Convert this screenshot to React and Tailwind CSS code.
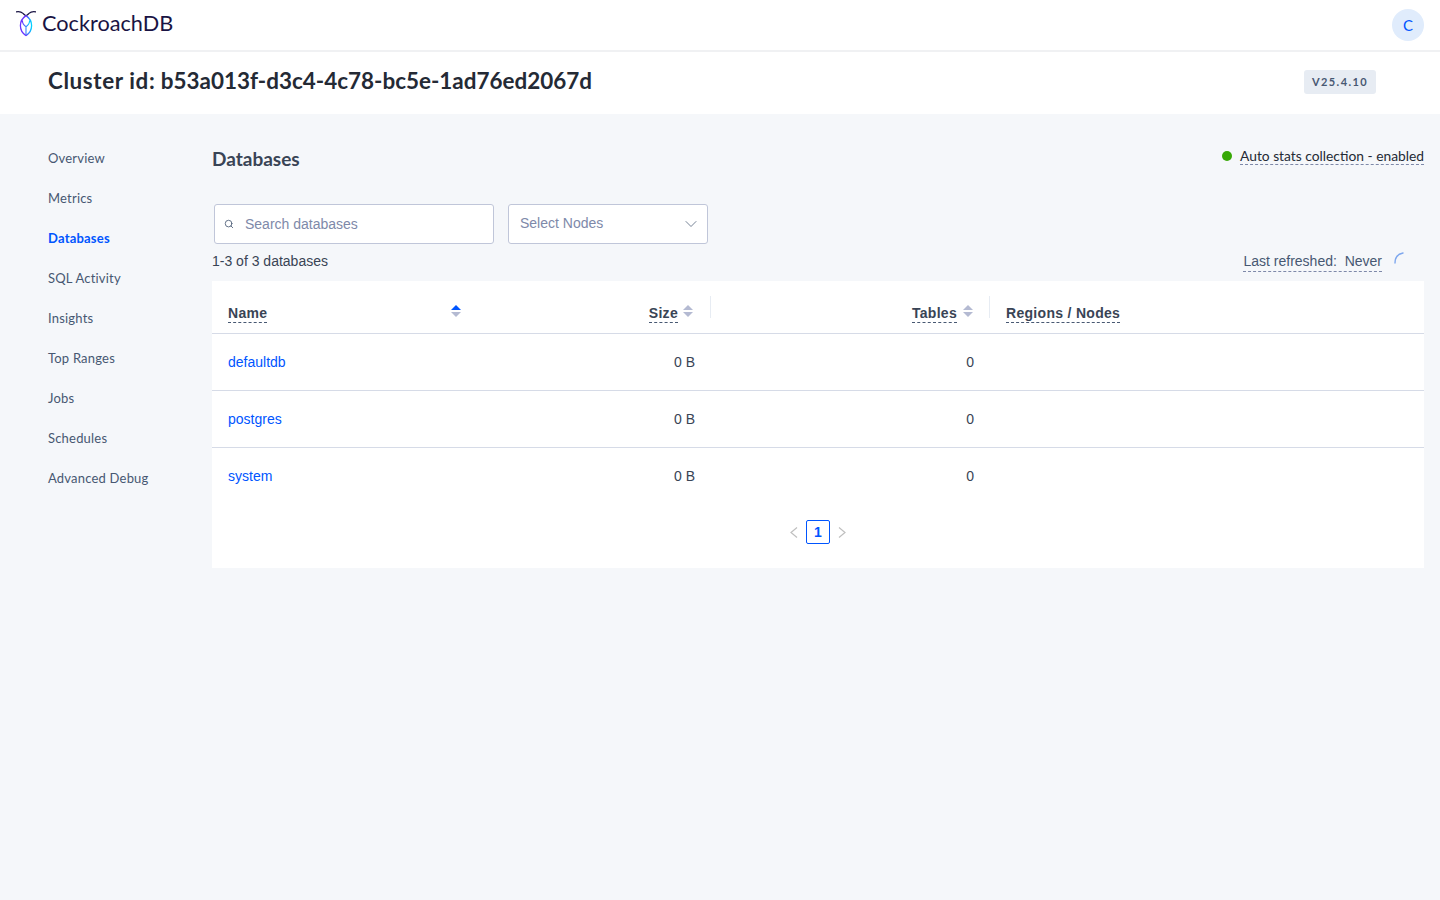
import { ChevronDown, Search } from "lucide-react"

const navItems = ["Overview", "Metrics", "Databases", "SQL Activity", "Insights", "Top Ranges", "Jobs", "Schedules", "Advanced Debug"]

const databases = ["defaultdb", "postgres", "system"]

function Logo() {
  return (
    <svg width="20" height="27" viewBox="0 0 20 27" fill="none" className="shrink-0">
      <defs>
        <linearGradient id="roach" x1="0" y1="0" x2="1" y2="0">
          <stop offset="0" stopColor="#6933ff" />
          <stop offset="1" stopColor="#00d4ff" />
        </linearGradient>
      </defs>
      <path d="M0 1.8C3 1.2 5.4 1.8 7 3.4C8.4 4.8 9 5.6 10 5.6C11 5.6 11.6 4.8 13 3.4C14.6 1.8 17 1.2 20 1.8" stroke="#1a1444" strokeWidth="1.2" strokeLinecap="round" />
      <path d="M10 25.6C6.6 23.6 4.4 20 4.4 15.6C4.4 11.4 6.4 8 10 5.6" stroke="#6933ff" strokeWidth="1.3" />
      <path d="M10 25.6C13.4 23.6 15.6 20 15.6 15.6C15.6 11.4 13.6 8 10 5.6" stroke="url(#roach)" strokeWidth="1.3" />
      <path d="M6.4 10.6C6.4 13.8 8 15.4 10 16.8C12 15.4 13.6 13.8 13.6 10.6M10 16.8V25" stroke="url(#roach)" strokeWidth="1.1" />
    </svg>
  )
}

function SortIcon({ active }) {
  return (
    <span className="flex flex-col gap-[2px]">
      <span className={`w-0 h-0 border-x-[5px] border-x-transparent border-b-[5px] ${active ? "border-b-[#0055ff]" : "border-b-[#b4bad2]"}`} />
      <span className="w-0 h-0 border-x-[5px] border-x-transparent border-t-[5px] border-t-[#b4bad2]" />
    </span>
  )
}

function HeadLabel({ children }) {
  return (
    <span className="text-[14px] leading-[17px] font-bold tracking-[0.3px] text-[#394455] border-b border-dashed border-[#475872]">
      {children}
    </span>
  )
}

function PageArrow({ d }) {
  return (
    <svg width="8" height="11" viewBox="0 0 8 11" fill="none">
      <path d={d} stroke="#bfbfbf" strokeWidth="1.2" />
    </svg>
  )
}

export default function App() {
  return (
    <div className="min-h-[900px] bg-[#f5f7fa] font-['Liberation_Sans',sans-serif]">
      {/* Top bar */}
      <header className="h-[52px] bg-white border-b-2 border-[#f0f1f3] flex items-start justify-between pl-4 pr-4">
        <div className="flex items-center gap-[6px] pt-[9px]">
          <Logo />
          <span className="font-['Lato',sans-serif] text-[21.7px] leading-[28px] text-[#1a1444]">CockroachDB</span>
        </div>
        <div className="mt-[9px] w-8 h-8 rounded-full bg-[#e0ecfc] flex items-center justify-center text-[#0055ff] text-[15px] font-['Lato',sans-serif]">
          C
        </div>
      </header>

      {/* Cluster row */}
      <div className="h-[62px] bg-white flex items-start justify-between pl-12 pr-16 pt-[14px]">
        <h1 className="font-['Lato',sans-serif] font-bold text-[22.45px] leading-[30px] text-[#242a35]">
          <span className="tracking-[0.6px]">Cluster id:</span> b53a013f-d3c4-4c78-bc5e-1ad76ed2067d
        </h1>
        <span className="w-[72px] h-6 mt-[4px] rounded-[3px] bg-[#e7ecf3] flex items-center justify-center font-['Lato',sans-serif] font-bold text-[11px] tracking-[1.4px] text-[#475872]">
          V25.4.10
        </span>
      </div>

      <div className="flex pr-4">
        {/* Side nav */}
        <nav className="w-[212px] shrink-0 pl-12 pt-[25px] flex flex-col">
          {navItems.map((item) => (
            <a
              key={item}
              className={`h-10 flex items-start pt-[10px] leading-[18px] font-['Lato',sans-serif] text-[13px] tracking-[0.2px] ${item === "Databases" ? "font-bold text-[#0055ff]" : "text-[#475872]"}`}
            >
              {item}
            </a>
          ))}
        </nav>

        <main className="flex-1 min-w-0">
          <div className="flex justify-between items-start pt-[33px] h-[90px]">
            <h2 className="font-['Lato',sans-serif] font-bold text-[19px] leading-[24px] text-[#394455]">Databases</h2>
            <div className="flex items-center gap-[8px]">
              <span className="w-[10px] h-[10px] rounded-full bg-[#37a806]" />
              <span className="font-['Lato',sans-serif] text-[13.8px] leading-[17px] text-[#242a35] border-b border-dashed border-[#7e89a9]">
                Auto stats collection - enabled
              </span>
            </div>
          </div>

          {/* Filters */}
          <div className="flex gap-[14px] pl-[2px]">
            <div className="w-[280px] h-10 bg-white border border-[#c0c6d9] rounded-[3px] flex items-center pl-[9px] gap-[11px]">
              <Search size={10} className="text-[#475872]" />
              <span className="text-[14px] text-[#7e89a9]">Search databases</span>
            </div>
            <div className="w-[200px] h-10 bg-white border border-[#c0c6d9] rounded-[3px] flex items-center justify-between pl-[11px] pr-[6px]">
              <span className="text-[14px] text-[#7e89a9] pb-[2px]">Select Nodes</span>
              <ChevronDown size={20} strokeWidth={0.9} className="text-[#475872]" />
            </div>
          </div>

          {/* Counts */}
          <div className="flex justify-between items-start h-[37px] pt-[9px]">
            <span className="text-[14px] leading-[17px] text-[#394455]">1-3 of 3 databases</span>
            <div className="flex items-start gap-[12px] pr-[20px]">
              <span className="text-[14px] leading-[17px] text-[#475872] border-b border-dashed border-[#7e89a9] pb-[1px] whitespace-pre">
                Last refreshed:  Never
              </span>
              <svg width="10" height="12" viewBox="0 0 10 12" fill="none" className="mt-[-1px]">
                <path d="M1 11C1 6 4 2 9 1" stroke="#7fa8ee" strokeWidth="1.4" strokeLinecap="round" />
              </svg>
            </div>
          </div>

          {/* Table */}
          <div className="bg-white h-[287px]">
            <div className="grid grid-cols-[499px_279px_1fr] h-[53px] border-b border-[#d6dbe7]">
              <div className="flex items-start pl-4 pt-[24px] relative">
                <HeadLabel>Name</HeadLabel>
                <span className="absolute left-[239px] top-[24px]"><SortIcon active /></span>
                <span className="flex items-start gap-[5px] absolute right-[18px] top-[24px]">
                  <HeadLabel>Size</HeadLabel>
                  <SortIcon />
                </span>
                <span className="absolute right-0 top-[15px] h-[22px] w-px bg-[#e7ecf3]" />
              </div>
              <div className="flex items-start justify-end gap-[6px] pr-[17px] pt-[24px] relative">
                <HeadLabel>Tables</HeadLabel>
                <SortIcon />
                <span className="absolute right-0 top-[15px] h-[22px] w-px bg-[#e7ecf3]" />
              </div>
              <div className="flex items-start pl-4 pt-[24px]">
                <HeadLabel>Regions / Nodes</HeadLabel>
              </div>
            </div>
            {databases.map((db, i) => (
              <div
                key={db}
                className={`grid grid-cols-[499px_279px_1fr] items-center text-[14px] h-[57px] ${i < 2 ? "border-b border-[#d6dbe7]" : ""}`}
              >
                <div className="flex justify-between pl-4 pr-4">
                  <a className="text-[#0055ff]">{db}</a>
                  <span className="text-[#394455]">0 B</span>
                </div>
                <div className="text-right pr-4 text-[#394455]">0</div>
                <div />
              </div>
            ))}
            <div className="flex items-center justify-center gap-2 h-6 mt-[15px]">
              <PageArrow d="M7 0.5L1 5.5L7 10.5" />
              <span className="w-6 h-6 flex items-center justify-center rounded-[2px] border border-[#0055ff] bg-white text-[14px] font-bold text-[#0055ff]">1</span>
              <PageArrow d="M1 0.5L7 5.5L1 10.5" />
            </div>
          </div>
        </main>
      </div>
    </div>
  )
}
